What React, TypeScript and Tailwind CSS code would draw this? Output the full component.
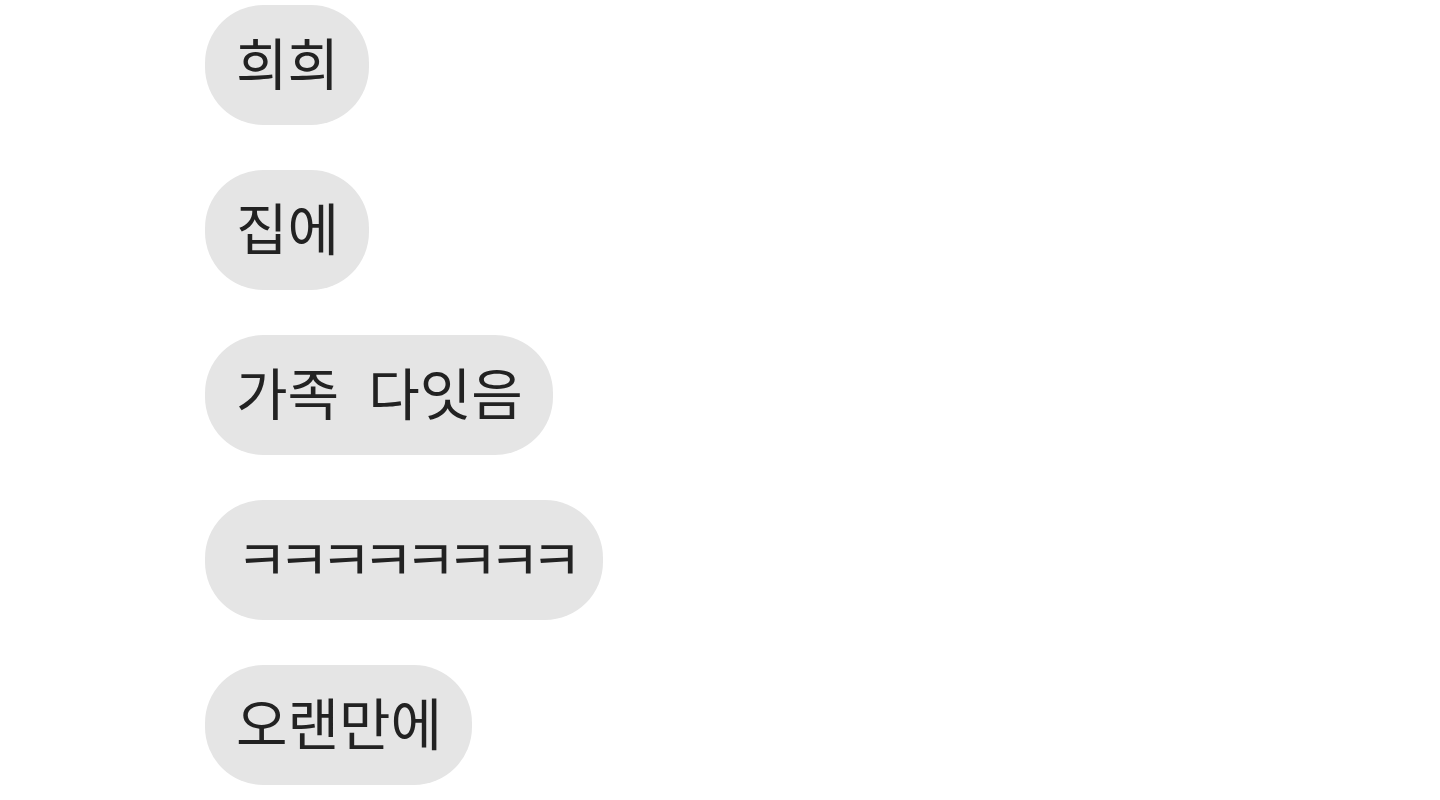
const messages = [
  { text: '희희', track: 'tracking-normal' },
  { text: '집에', track: 'tracking-normal' },
  { text: '가족  다잇음', track: 'tracking-normal [word-spacing:2px]' },
  { text: 'ㅋㅋㅋㅋㅋㅋㅋㅋ', track: 'tracking-[-9.4px]' },
  { text: '오랜만에', track: 'tracking-normal' },
];

export default function App() {
  return (
    <div className="min-h-screen w-full bg-white">
      <div className="flex flex-col items-start gap-[45px] pl-[205px] pt-[5px]">
        {messages.map((m, i) => (
          <div
            key={i}
            className={`flex h-[120px] items-center whitespace-pre rounded-[58px] bg-[#e5e5e5] pb-[8px] pl-[31px] pr-[30px] text-[56px] leading-none text-[#222222] ${m.track}`}
            style={{ fontFamily: '"Noto Sans CJK KR", "Noto Sans", sans-serif' }}
          >
            {m.text}
          </div>
        ))}
      </div>
    </div>
  );
}
